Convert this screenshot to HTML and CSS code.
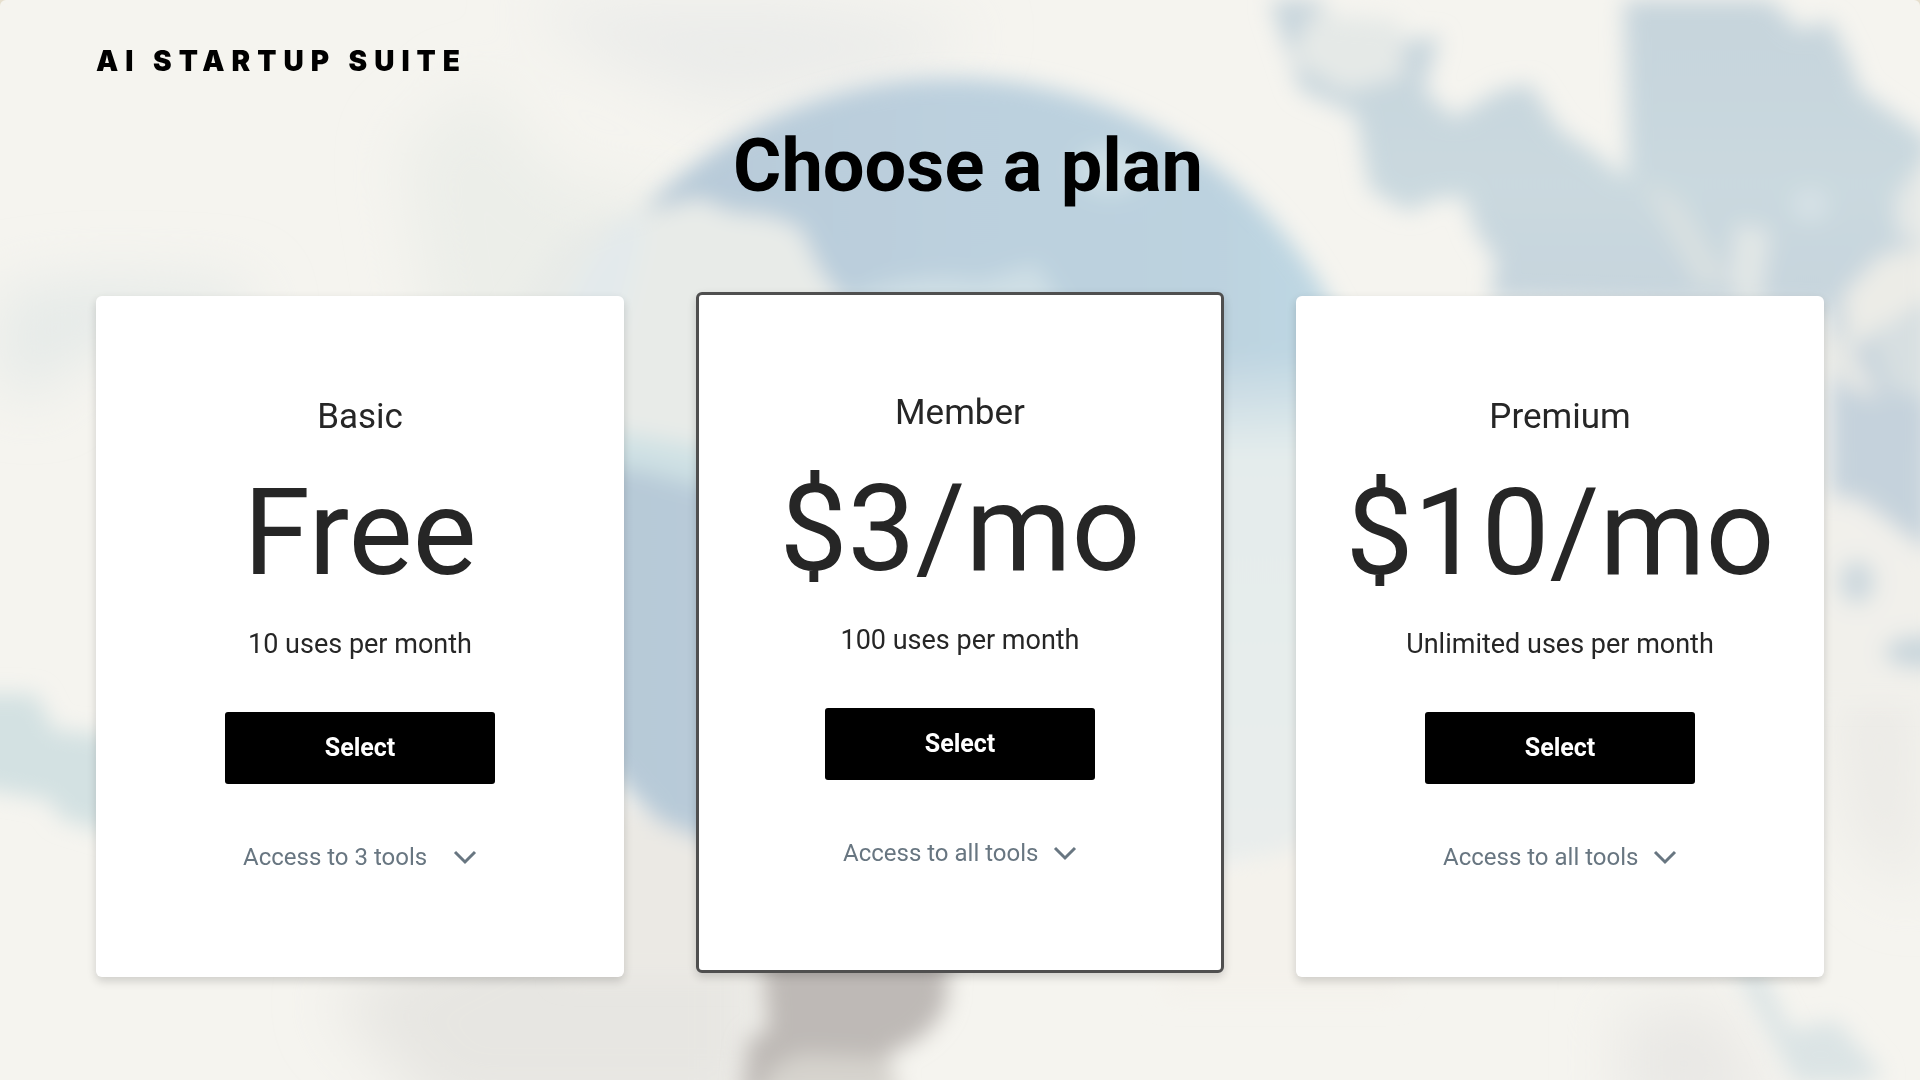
FILE: index.html
```html
<!DOCTYPE html>
<html lang="en">
<head>
<meta charset="utf-8">
<meta name="viewport" content="width=device-width, initial-scale=1">
<title>Choose a plan – AI Startup Suite</title>
<link rel="stylesheet" href="styles.css">
</head>
<body>
<svg class="backdrop" viewBox="0 0 1920 1080" preserveAspectRatio="xMidYMid slice" aria-hidden="true">
  <defs>
    <filter id="soft" x="-20%" y="-20%" width="140%" height="140%"><feGaussianBlur stdDeviation="11"/></filter>
    <filter id="haze" x="-40%" y="-40%" width="180%" height="180%"><feGaussianBlur stdDeviation="30"/></filter>
    <linearGradient id="disc" x1="0" y1="0" x2="1" y2="0">
      <stop offset="0" stop-color="#b5c7d5"/>
      <stop offset="0.5" stop-color="#bcd0de"/>
      <stop offset="0.8" stop-color="#bcd2df"/>
      <stop offset="1" stop-color="#bfdae5"/>
    </linearGradient>
    <linearGradient id="fade" x1="0" y1="0" x2="0" y2="1">
      <stop offset="0" stop-color="#e4ecec" stop-opacity="0"/>
      <stop offset="0.2" stop-color="#e4ecec"/>
      <stop offset="1" stop-color="#e9edec"/>
    </linearGradient>
    <linearGradient id="sky" x1="0" y1="0" x2="0" y2="1">
      <stop offset="0" stop-color="#c6d4dc"/>
      <stop offset="0.3" stop-color="#cad9df"/>
      <stop offset="0.6" stop-color="#c5d2dc"/>
      <stop offset="1" stop-color="#c6d3dc"/>
    </linearGradient>
  </defs>
  <rect width="1920" height="1080" fill="#f5f4ef"/>
  <g filter="url(#haze)">
    <path d="M400 150 480 80 560 180 680 200 640 400 640 700 440 400Z" fill="#eceee9"/>
    <path d="M0 290 100 280 240 285 260 330 80 350 40 400 0 390Z" fill="#e5eae8"/>
    <path d="M520 0 800 0 980 30 900 80 720 110 600 60Z" fill="#ebecea"/>
    <path d="M330 1000 620 850 760 900 760 1120 440 1120Z" fill="#e7e6e2"/>
    <path d="M1620 1010 1720 1000 1780 1120 1620 1120Z" fill="#e9e8e5"/>
    <path d="M1830 690 1920 670 1920 900 1850 840Z" fill="#ebeae6"/>
  </g>
  <g filter="url(#soft)">
    <circle cx="953" cy="508" r="430" fill="url(#disc)"/>
    <path d="M500 330 560 240 610 218 660 208 700 198 730 212 770 216 800 228 820 270 850 310 900 420 720 480 640 455 600 420 520 430Z" fill="#e8ebe8"/>
    <path d="M560 320 584 270 616 226 644 212 640 250 620 330Z" fill="#e3eaec"/>
    <path d="M600 430 640 436 720 450 760 500 720 490 640 470 600 465Z" fill="#cfe1e4"/>
    <path d="M1180 350 1300 350 1400 420 1400 860 1300 850 1180 870Z" fill="url(#fade)"/>
    <path d="M1200 880 1300 845 1380 790 1420 820 1400 1000 1160 1000Z" fill="#f4f2ec"/>
    <path d="M560 800 620 806 700 838 760 870 760 980 560 980Z" fill="#ebe9e4"/>
    <path d="M840 300Q920 268 980 282L1036 264 1070 320 900 340Z" fill="#cfdfe5"/>
    <ellipse cx="1110" cy="170" rx="34" ry="24" fill="#cfe0e6"/>
    <path d="M1270 0 1320 0 1340 50 1440 36 1424 90 1454 118 1500 90 1530 84 1560 130 1590 150 1628 180 1624 0 1770 0 1800 30 1830 20 1850 60 1860 90 1930 140 1930 620 1890 560 1850 510 1830 500 1830 310 1490 300 1496 260 1476 232 1464 196 1430 200 1410 212 1370 190 1356 115 1300 90Z" fill="url(#sky)"/>
    <path d="M1310 14 1400 20 1404 76 1346 92 1290 60Z" fill="#e5e9e7"/>
    <path d="M1640 180 1680 200 1730 280 1700 290Z" fill="#d8e0e1"/>
    <path d="M1735 224 1770 230 1760 310 1730 290Z" fill="#e2e7e6"/>
    <ellipse cx="1810" cy="205" rx="18" ry="16" fill="#d7e2e6"/>
    <path d="M1842 296 1880 256 1930 244 1930 300 1880 330 1850 350Z" fill="#ecece7"/>
    <path d="M1820 325 1846 340 1866 370 1880 400 1850 390 1820 360Z" fill="#e6e8e5"/>
    <path d="M1870 330 1930 310 1930 400 1890 390Z" fill="#d7dfe1"/>
    <path d="M1930 150 1894 200 1900 240 1930 240Z" fill="#e6e9e7"/>
    <path d="M1800 490 1860 500 1900 530 1940 560 1940 700 1800 700Z" fill="#f1f0eb"/>
    <ellipse cx="1857" cy="582" rx="18" ry="22" fill="#ccd8de"/>
    <ellipse cx="1920" cy="652" rx="36" ry="16" fill="#c8d5dc"/>
    <path d="M-30 694 36 694 54 730 120 736 120 836 60 818 50 800-30 786Z" fill="#d3e1e2"/>
    <path d="M760 940H950L946 1004Q930 1040 890 1052L880 1100H742L748 1040 768 1030Z" fill="#beb9b6"/>
    <path d="M770 1070 800 1054 890 1058 900 1100 760 1100Z" fill="#d6d3cd"/>
    <path d="M1730 960 1762 970 1790 1030 1836 1020 1884 1076 1860 1084 1796 1084Z" fill="#dbe4e5"/>
  </g>
</svg>
<div class="page">
  <header class="header"><a class="brand" href="#">AI STARTUP SUITE</a></header>
  <main class="main">
    <h1 class="title">Choose a plan</h1>
    <div class="plans">
      <section class="plan">
        <h2 class="plan-name">Basic</h2>
        <p class="price">Free</p>
        <p class="quota">10 uses per month</p>
        <button class="select" type="button">Select</button>
        <button class="tools" type="button" aria-expanded="false"><span>Access to 3 tools</span><svg class="chevron" viewBox="0 0 24 16" aria-hidden="true"><path d="M2 3 12 13 22 3"/></svg></button>
      </section>
      <section class="plan plan-featured">
        <h2 class="plan-name">Member</h2>
        <p class="price">$3/mo</p>
        <p class="quota">100 uses per month</p>
        <button class="select" type="button">Select</button>
        <button class="tools" type="button" aria-expanded="false"><span>Access to all tools</span><svg class="chevron" viewBox="0 0 24 16" aria-hidden="true"><path d="M2 3 12 13 22 3"/></svg></button>
      </section>
      <section class="plan">
        <h2 class="plan-name">Premium</h2>
        <p class="price">$10/mo</p>
        <p class="quota">Unlimited uses per month</p>
        <button class="select" type="button">Select</button>
        <button class="tools" type="button" aria-expanded="false"><span>Access to all tools</span><svg class="chevron" viewBox="0 0 24 16" aria-hidden="true"><path d="M2 3 12 13 22 3"/></svg></button>
      </section>
    </div>
  </main>
</div>
</body>
</html>
```
FILE: styles.css
```css
* { box-sizing: border-box; }

body {
  margin: 0;
  min-height: 100vh;
  background: #e6dfcd;
  color: #262626;
  font-family: Roboto, "Liberation Sans", sans-serif;
}

.backdrop {
  position: fixed;
  inset: 0;
  z-index: -1;
  width: 100%;
  height: 100%;
  border-radius: 6px 6px 0 0;
}

.page { padding: 40px 96px; }

.header { display: flex; }

.brand {
  color: #000;
  font-family: Inter, Roboto, sans-serif;
  font-size: 28px;
  font-weight: 900;
  line-height: 42px;
  letter-spacing: 7px;
  text-decoration: none;
}

.title {
  margin: 38px 0 80px;
  padding-left: 16px;
  color: #000;
  font-size: 74px;
  font-weight: 700;
  line-height: 92px;
  text-align: center;
}

.plans {
  display: grid;
  grid-template-columns: repeat(3, 1fr);
  gap: 72px;
}

.plan {
  display: flex;
  flex-direction: column;
  align-items: center;
  margin-top: 4px;
  padding: 97px 24px 102px;
  border-radius: 6px;
  background: #fff;
  box-shadow: 0 4px 10px rgba(0, 0, 0, 0.16);
}

.plan-featured {
  margin: 0 0 4px;
  padding: 94px 21px 99px;
  border: 3px solid #4f4f4f;
}

.plan-name {
  margin: 0;
  font-size: 35px;
  font-weight: 400;
  line-height: 48px;
}

.price {
  margin: 20px 0 12px;
  font-size: 121px;
  line-height: 144px;
}

.quota {
  margin: 7px 0 48px;
  font-size: 27px;
  line-height: 40px;
}

.select {
  width: 270px;
  height: 72px;
  border: 0;
  border-radius: 3px;
  background: #000;
  color: #fff;
  font: 700 25px/32px Roboto, "Liberation Sans", sans-serif;
}

.tools {
  display: flex;
  align-items: center;
  justify-content: space-between;
  width: 234px;
  margin-top: 55px;
  padding: 0;
  border: 0;
  background: none;
  color: #687681;
  font: 400 24px/36px Roboto, "Liberation Sans", sans-serif;
}

.chevron {
  width: 24px;
  height: 16px;
  fill: none;
  stroke: currentColor;
  stroke-width: 3;
}
```
